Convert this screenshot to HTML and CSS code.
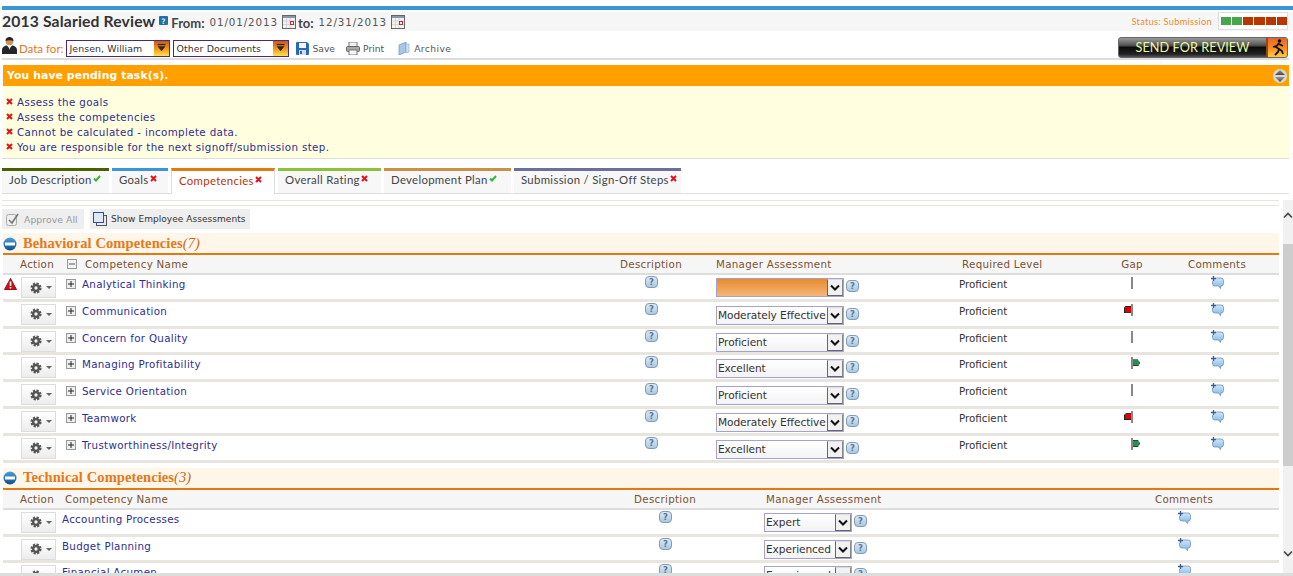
FILE: index.html
```html
<!DOCTYPE html>
<html lang="en">
<head>
<meta charset="utf-8">
<title>2013 Salaried Review</title>
<link rel="stylesheet" href="styles.css">
</head>
<body>
<svg class="defs" width="0" height="0" aria-hidden="true">
  <defs>
    <linearGradient id="gBlue" x1="0" y1="0" x2="0" y2="1"><stop offset="0" stop-color="#4aa0dc"/><stop offset="1" stop-color="#0d4f8e"/></linearGradient>
    <linearGradient id="gGrey" x1="0" y1="0" x2="0" y2="1"><stop offset="0" stop-color="#999"/><stop offset="1" stop-color="#444"/></linearGradient>
    <linearGradient id="gHelp" x1="0" y1="0" x2="0" y2="1"><stop offset="0" stop-color="#dfeaf4"/><stop offset="1" stop-color="#a9c6e0"/></linearGradient>
    <linearGradient id="gBub" x1="0" y1="0" x2="0" y2="1"><stop offset="0" stop-color="#cfe5f7"/><stop offset="1" stop-color="#7fb6e6"/></linearGradient>
    <symbol id="i-x" viewBox="0 0 7 7"><path d="M1 1l5 5M6 1L1 6" stroke="#e8101c" stroke-width="2" fill="none"/></symbol>
    <symbol id="i-check" viewBox="0 0 8 7"><path d="M1 3.500l2 2L7 1" stroke="#35b52e" stroke-width="2" fill="none"/></symbol>
    <symbol id="i-help" viewBox="0 0 13 12"><rect x=".5" y=".5" width="12" height="11" rx="3.500" fill="url(#gHelp)" stroke="#7f9db8"/><text x="6.500" y="9.200" font-family="DejaVu Sans" font-size="8.500" font-weight="bold" text-anchor="middle" fill="#55779a">?</text></symbol>
    <symbol id="i-comment" viewBox="0 0 13 13"><path d="M4.500 2h5.500a2.500 2.500 0 0 1 2.500 2.500v3a2.500 2.500 0 0 1-2.500 2.500l-.5 2.500-2-2.500H4a2.500 2.500 0 0 1-2.500-2.500V5" fill="url(#gBub)" stroke="#6e93b8" stroke-width=".8"/><path d="M2.500 0v5M0 2.500h5" stroke="#3e5c92" stroke-width="1.300"/></symbol>
    <symbol id="i-gear" viewBox="0 0 14 14"><circle cx="7" cy="7" r="5.200" fill="none" stroke="#555" stroke-width="2.600" stroke-dasharray="2.550 1.530"/><circle cx="7" cy="7" r="3.300" fill="none" stroke="#555" stroke-width="2.800"/></symbol>
    <symbol id="i-plus" viewBox="0 0 10 10"><rect x=".5" y=".5" width="9" height="9" fill="#eee" stroke="#999"/><path d="M2 5h6M5 2v6" stroke="#222"/></symbol>
    <symbol id="i-minus" viewBox="0 0 10 10"><rect x=".5" y=".5" width="9" height="9" fill="#f2f2f2" stroke="#999"/><path d="M2 5h6" stroke="#555"/></symbol>
    <symbol id="i-section" viewBox="0 0 14 14"><circle cx="7" cy="7" r="6.500" fill="url(#gBlue)"/><rect x="2" y="5.500" width="10" height="3" fill="#fff"/></symbol>
    <symbol id="i-chev" viewBox="0 0 10 7"><path d="M1 1.500l4 4 4-4" stroke="#111" stroke-width="2" fill="none"/></symbol>
    <symbol id="i-cal" viewBox="0 0 14 14"><rect x=".5" y=".5" width="13" height="13" fill="#f4f2ec" stroke="#666"/><rect x="1" y="1" width="12" height="2" fill="#8a97a8"/><path d="M1 6h12M1 9.500h12M4.500 3v10M8 3v10" stroke="#c9c9d6" stroke-width=".7"/><rect x="8.500" y="6.500" width="3" height="3" fill="none" stroke="#b3304a"/></symbol>
    <symbol id="i-combo" viewBox="0 0 16 16"><path d="M3 5.500h9L7.500 11z" fill="#3a2410"/><path d="M3 3.500h9" stroke="#3a2410" stroke-width="1.500"/></symbol>
  </defs>
</svg>
<div class="app">
  <div class="accent"></div>
  <header class="titlebar">
    <h1 class="title">2013 Salaried Review</h1>
    <svg class="title-help" width="9" height="9" viewBox="0 0 9 9"><rect width="9" height="9" rx="1" fill="#1f6fa8"/><text x="4.500" y="7.500" font-family="DejaVu Sans" font-size="7.500" font-weight="bold" text-anchor="middle" fill="#cfe6f5">?</text></svg>
    <span class="range-label">From:</span>
    <span class="date">01/01/2013</span>
    <svg class="cal" width="14" height="14"><use href="#i-cal"/></svg>
    <span class="range-label to">to:</span>
    <span class="date">12/31/2013</span>
    <svg class="cal" width="14" height="14"><use href="#i-cal"/></svg>
    <div class="status">
      <span class="status-text">Status: Submission</span>
      <div class="status-steps">
        <i class="step done"></i><i class="step done"></i><i class="step todo"></i><i class="step todo"></i><i class="step todo"></i><i class="step todo"></i>
      </div>
    </div>
  </header>
  <div class="toolbar">
    <svg class="person" width="15" height="17" viewBox="0 0 15 17"><circle cx="7.500" cy="4.500" r="3.800" fill="#c8935e"/><path d="M3.500 4C3.500 1 5.500 0 7.500 0s4 1 4 4C9 3 6 3 3.500 4z" fill="#2a2320"/><path d="M0 17v-4c0-3 3-4.500 5-4.500l2.500 3 2.500-3c2 0 5 1.500 5 4.500v4z" fill="#26262a"/><path d="M6.500 9h2l-1 4z" fill="#eee"/></svg>
    <span class="data-for">Data for:</span>
    <div class="combo combo-a"><span class="combo-val">Jensen, William</span><span class="combo-btn"><svg width="14" height="15"><use href="#i-combo"/></svg></span></div>
    <div class="combo combo-b"><span class="combo-val">Other Documents</span><span class="combo-btn"><svg width="14" height="15"><use href="#i-combo"/></svg></span></div>
    <a class="tool tool-save"><svg width="13" height="13" viewBox="0 0 13 13"><path d="M0 1a1 1 0 0 1 1-1h10l2 2v10a1 1 0 0 1-1 1H1a1 1 0 0 1-1-1z" fill="#2a68b0"/><rect x="3" y="1" width="7" height="5" fill="#f2f6fb"/><rect x="3" y="8" width="7" height="5" fill="#cfdcec"/><rect x="4" y="9" width="2" height="3" fill="#2a68b0"/></svg>Save</a>
    <a class="tool tool-print"><svg width="14" height="13" viewBox="0 0 14 13"><rect x="3" y="0" width="8" height="5" fill="#f2f2f2" stroke="#777"/><rect x=".5" y="4.500" width="13" height="5" rx="1" fill="#a8a8a8" stroke="#666"/><rect x="3" y="8" width="8" height="5" fill="#f8f8f8" stroke="#777"/></svg>Print</a>
    <a class="tool tool-archive"><svg width="12" height="13" viewBox="0 0 12 13"><path d="M1 3l7-3v10l-7 3z" fill="#a9c6e6" stroke="#6d93bc" stroke-width=".7"/><path d="M8 2h3v8l-3 1z" fill="#d2e2f2" stroke="#8fb0d0" stroke-width=".7"/></svg>Archive</a>
    <button class="send" type="button"><span class="send-label">SEND FOR REVIEW</span><span class="send-run"><svg width="14" height="17" viewBox="0 0 14 17"><circle cx="8.500" cy="2" r="1.800" fill="#111"/><path d="M8 4L5 8l3 2-1 3-3 3M8 5l4 2M5 7L2 8M8 10l3 2 1 3" stroke="#111" stroke-width="1.800" fill="none"/></svg></span></button>
  </div>
  <section class="alert">
    <div class="alert-head"><span>You have pending task(s).</span>
      <svg width="14" height="14" viewBox="0 0 14 14"><circle cx="7" cy="7" r="7" fill="#d8d8d8"/><path d="M7 1l5 5H2z" fill="url(#gGrey)"/><path d="M7 13L2 8h10z" fill="url(#gGrey)"/></svg>
    </div>
    <ul class="alert-list">
      <li><svg width="7" height="7"><use href="#i-x"/></svg>Assess the goals</li>
      <li><svg width="7" height="7"><use href="#i-x"/></svg>Assess the competencies</li>
      <li><svg width="7" height="7"><use href="#i-x"/></svg>Cannot be calculated - incomplete data.</li>
      <li><svg width="7" height="7"><use href="#i-x"/></svg>You are responsible for the next signoff/submission step.</li>
    </ul>
  </section>
  <nav class="tabs">
    <a class="tab t-job">Job Description<svg width="8" height="7"><use href="#i-check"/></svg></a>
    <a class="tab t-goals">Goals<svg width="7" height="7"><use href="#i-x"/></svg></a>
    <a class="tab t-comp active">Competencies<svg width="7" height="7"><use href="#i-x"/></svg></a>
    <a class="tab t-over">Overall Rating<svg width="7" height="7"><use href="#i-x"/></svg></a>
    <a class="tab t-dev">Development Plan<svg width="8" height="7"><use href="#i-check"/></svg></a>
    <a class="tab t-sub">Submission / Sign-Off Steps<svg width="7" height="7"><use href="#i-x"/></svg></a>
  </nav>
  <div class="pane">
    <main class="content">
      <div class="actions">
        <button class="act act-off" type="button"><svg width="15" height="15" viewBox="0 0 15 15"><rect x="1.500" y="2.500" width="10" height="11" rx="2" fill="#eee" stroke="#aaa"/><path d="M4 8l3 3 6-9" stroke="#777" stroke-width="1.600" fill="none"/></svg>Approve All</button>
        <button class="act act-show" type="button"><svg width="14" height="14" viewBox="0 0 14 14"><rect x="3.500" y="3.500" width="10" height="10" fill="#e6e6ee" stroke="#555"/><rect x=".5" y=".5" width="10" height="10" fill="#dfe9f6" stroke="#2c4f9a"/></svg>Show Employee Assessments</button>
      </div>

      <h2 class="section-head"><svg width="14" height="14"><use href="#i-section"/></svg><span>Behavioral Competencies<em>(7)</em></span></h2>
      <div class="grid-a colhead">
        <span></span><span class="c-action">Action</span><span class="c-tree"><svg width="10" height="10"><use href="#i-minus"/></svg></span><span class="a-name">Competency Name</span><span class="ctr">Description</span><span class="mgr-a">Manager Assessment</span><span class="req">Required Level</span><span class="ctr">Gap</span><span class="ctr">Comments</span>
      </div>

      <div class="grid-a row">
        <span class="warn"><svg width="13" height="12" viewBox="0 0 13 12"><path d="M6.500 .5L12.500 11.500H.5z" fill="#c8141c" stroke="#9a0f14" stroke-linejoin="round"/><rect x="5.700" y="3.500" width="1.600" height="4.500" fill="#fff"/><rect x="5.700" y="9" width="1.600" height="1.500" fill="#fff"/></svg></span>
        <button class="gear" type="button"><svg width="14" height="14"><use href="#i-gear"/></svg><i class="caret"></i></button>
        <span class="tree"><svg width="10" height="10"><use href="#i-plus"/></svg></span>
        <a class="name">Analytical Thinking</a>
        <span class="ico"><svg width="13" height="12"><use href="#i-help"/></svg></span>
        <span class="mgr-a cell-sel"><span class="sel sel-a sel-empty"><span class="sel-val"></span><span class="sel-btn"><svg width="10" height="7"><use href="#i-chev"/></svg></span></span><svg class="sel-help" width="13" height="12"><use href="#i-help"/></svg></span>
        <span class="level">Proficient</span>
        <span class="gap"><i class="pole"></i></span>
        <span class="ico"><svg width="13" height="13"><use href="#i-comment"/></svg></span>
      </div>
      <div class="grid-a row">
        <span></span>
        <button class="gear" type="button"><svg width="14" height="14"><use href="#i-gear"/></svg><i class="caret"></i></button>
        <span class="tree"><svg width="10" height="10"><use href="#i-plus"/></svg></span>
        <a class="name">Communication</a>
        <span class="ico"><svg width="13" height="12"><use href="#i-help"/></svg></span>
        <span class="mgr-a cell-sel"><span class="sel sel-a"><span class="sel-val">Moderately Effective</span><span class="sel-btn"><svg width="10" height="7"><use href="#i-chev"/></svg></span></span><svg class="sel-help" width="13" height="12"><use href="#i-help"/></svg></span>
        <span class="level">Proficient</span>
        <span class="gap"><i class="flag flag-low"></i><i class="pole"></i></span>
        <span class="ico"><svg width="13" height="13"><use href="#i-comment"/></svg></span>
      </div>
      <div class="grid-a row">
        <span></span>
        <button class="gear" type="button"><svg width="14" height="14"><use href="#i-gear"/></svg><i class="caret"></i></button>
        <span class="tree"><svg width="10" height="10"><use href="#i-plus"/></svg></span>
        <a class="name">Concern for Quality</a>
        <span class="ico"><svg width="13" height="12"><use href="#i-help"/></svg></span>
        <span class="mgr-a cell-sel"><span class="sel sel-a"><span class="sel-val">Proficient</span><span class="sel-btn"><svg width="10" height="7"><use href="#i-chev"/></svg></span></span><svg class="sel-help" width="13" height="12"><use href="#i-help"/></svg></span>
        <span class="level">Proficient</span>
        <span class="gap"><i class="pole"></i></span>
        <span class="ico"><svg width="13" height="13"><use href="#i-comment"/></svg></span>
      </div>
      <div class="grid-a row">
        <span></span>
        <button class="gear" type="button"><svg width="14" height="14"><use href="#i-gear"/></svg><i class="caret"></i></button>
        <span class="tree"><svg width="10" height="10"><use href="#i-plus"/></svg></span>
        <a class="name">Managing Profitability</a>
        <span class="ico"><svg width="13" height="12"><use href="#i-help"/></svg></span>
        <span class="mgr-a cell-sel"><span class="sel sel-a"><span class="sel-val">Excellent</span><span class="sel-btn"><svg width="10" height="7"><use href="#i-chev"/></svg></span></span><svg class="sel-help" width="13" height="12"><use href="#i-help"/></svg></span>
        <span class="level">Proficient</span>
        <span class="gap"><i class="pole"></i><i class="flag flag-high"></i></span>
        <span class="ico"><svg width="13" height="13"><use href="#i-comment"/></svg></span>
      </div>
      <div class="grid-a row">
        <span></span>
        <button class="gear" type="button"><svg width="14" height="14"><use href="#i-gear"/></svg><i class="caret"></i></button>
        <span class="tree"><svg width="10" height="10"><use href="#i-plus"/></svg></span>
        <a class="name">Service Orientation</a>
        <span class="ico"><svg width="13" height="12"><use href="#i-help"/></svg></span>
        <span class="mgr-a cell-sel"><span class="sel sel-a"><span class="sel-val">Proficient</span><span class="sel-btn"><svg width="10" height="7"><use href="#i-chev"/></svg></span></span><svg class="sel-help" width="13" height="12"><use href="#i-help"/></svg></span>
        <span class="level">Proficient</span>
        <span class="gap"><i class="pole"></i></span>
        <span class="ico"><svg width="13" height="13"><use href="#i-comment"/></svg></span>
      </div>
      <div class="grid-a row">
        <span></span>
        <button class="gear" type="button"><svg width="14" height="14"><use href="#i-gear"/></svg><i class="caret"></i></button>
        <span class="tree"><svg width="10" height="10"><use href="#i-plus"/></svg></span>
        <a class="name">Teamwork</a>
        <span class="ico"><svg width="13" height="12"><use href="#i-help"/></svg></span>
        <span class="mgr-a cell-sel"><span class="sel sel-a"><span class="sel-val">Moderately Effective</span><span class="sel-btn"><svg width="10" height="7"><use href="#i-chev"/></svg></span></span><svg class="sel-help" width="13" height="12"><use href="#i-help"/></svg></span>
        <span class="level">Proficient</span>
        <span class="gap"><i class="flag flag-low"></i><i class="pole"></i></span>
        <span class="ico"><svg width="13" height="13"><use href="#i-comment"/></svg></span>
      </div>
      <div class="grid-a row">
        <span></span>
        <button class="gear" type="button"><svg width="14" height="14"><use href="#i-gear"/></svg><i class="caret"></i></button>
        <span class="tree"><svg width="10" height="10"><use href="#i-plus"/></svg></span>
        <a class="name">Trustworthiness/Integrity</a>
        <span class="ico"><svg width="13" height="12"><use href="#i-help"/></svg></span>
        <span class="mgr-a cell-sel"><span class="sel sel-a"><span class="sel-val">Excellent</span><span class="sel-btn"><svg width="10" height="7"><use href="#i-chev"/></svg></span></span><svg class="sel-help" width="13" height="12"><use href="#i-help"/></svg></span>
        <span class="level">Proficient</span>
        <span class="gap"><i class="pole"></i><i class="flag flag-high"></i></span>
        <span class="ico"><svg width="13" height="13"><use href="#i-comment"/></svg></span>
      </div>

      <h2 class="section-head second"><svg width="14" height="14"><use href="#i-section"/></svg><span>Technical Competencies<em>(3)</em></span></h2>
      <div class="grid-b colhead">
        <span></span><span class="c-action">Action</span><span class="b-name">Competency Name</span><span class="ctr">Description</span><span class="mgr-b">Manager Assessment</span><span class="ctr">Comments</span>
      </div>
      <div class="grid-b row">
        <span></span>
        <button class="gear" type="button"><svg width="14" height="14"><use href="#i-gear"/></svg><i class="caret"></i></button>
        <a class="name">Accounting Processes</a>
        <span class="ico"><svg width="13" height="12"><use href="#i-help"/></svg></span>
        <span class="mgr-b cell-sel"><span class="sel sel-b"><span class="sel-val">Expert</span><span class="sel-btn"><svg width="10" height="7"><use href="#i-chev"/></svg></span></span><svg class="sel-help" width="13" height="12"><use href="#i-help"/></svg></span>
        <span class="ico"><svg width="13" height="13"><use href="#i-comment"/></svg></span>
      </div>
      <div class="grid-b row">
        <span></span>
        <button class="gear" type="button"><svg width="14" height="14"><use href="#i-gear"/></svg><i class="caret"></i></button>
        <a class="name">Budget Planning</a>
        <span class="ico"><svg width="13" height="12"><use href="#i-help"/></svg></span>
        <span class="mgr-b cell-sel"><span class="sel sel-b"><span class="sel-val">Experienced</span><span class="sel-btn"><svg width="10" height="7"><use href="#i-chev"/></svg></span></span><svg class="sel-help" width="13" height="12"><use href="#i-help"/></svg></span>
        <span class="ico"><svg width="13" height="13"><use href="#i-comment"/></svg></span>
      </div>
      <div class="grid-b row">
        <span></span>
        <button class="gear" type="button"><svg width="14" height="14"><use href="#i-gear"/></svg><i class="caret"></i></button>
        <a class="name">Financial Acumen</a>
        <span class="ico"><svg width="13" height="12"><use href="#i-help"/></svg></span>
        <span class="mgr-b cell-sel"><span class="sel sel-b"><span class="sel-val">Experienced</span><span class="sel-btn"><svg width="10" height="7"><use href="#i-chev"/></svg></span></span><svg class="sel-help" width="13" height="12"><use href="#i-help"/></svg></span>
        <span class="ico"><svg width="13" height="13"><use href="#i-comment"/></svg></span>
      </div>
    </main>
    <div class="scrollbar">
      <svg width="10" height="7" viewBox="0 0 10 7"><path d="M1 5.500l4-4 4 4" stroke="#444" stroke-width="1.600" fill="none"/></svg>
      <div class="thumb"></div>
      <svg class="down" width="10" height="7" viewBox="0 0 10 7"><path d="M1 1.500l4 4 4-4" stroke="#444" stroke-width="1.600" fill="none"/></svg>
    </div>
  </div>
  <div class="foot"></div>
</div>
</body>
</html>
```
FILE: styles.css
```css
* { box-sizing: border-box; }
html, body { margin: 0; height: 576px; overflow: hidden; background: #fff; }
body { font-family: "DejaVu Sans", sans-serif; font-size: 10.3px; color: #2e2e8e; }
svg { display: block; flex: none; }
.defs { position: absolute; }
.app { display: flex; flex-direction: column; height: 576px; }

.accent { height: 4px; margin: 6px 0 2px 2px; background: #3a96d6; flex: none; }

.titlebar { flex: none; height: 19px; display: flex; align-items: center; margin-left: 2px; padding-right: 5px; background: #f6f6f6; }
.title { margin: 0; font: bold 15.700px/19px "Lato", sans-serif; color: #333; letter-spacing: .15px; white-space: nowrap; }
.title-help { margin: -3px 0 0 4px; }
.range-label { margin: 2px 0 0 3px; font: bold 13px "Lato", sans-serif; color: #444; }
.range-label.to { margin-left: 2px; }
.date { margin: 0 4px 0 5px; color: #555; letter-spacing: .9px; white-space: nowrap; }
.cal { margin: 0; }
.status { margin-left: auto; display: flex; align-items: center; }
.status-text { font: 9.200px "Lato", sans-serif; letter-spacing: .3px; color: #ec8a2b; }
.status-steps { margin-left: 6px; display: flex; gap: 1px; align-items: center; width: 70px; height: 18px; margin-top: -1px; padding-left: 1.500px; border: 1px solid #ddd; background: #fff; }
.step { width: 10.800px; height: 8px; }
.step.done { background: #47a64a; }
.step.todo { background: #b93600; }

.toolbar { flex: none; height: 29px; margin: 0 4px 0 2px; display: flex; align-items: center; border-bottom: 2px solid #ddd; padding-top: 8px; color: #555; }
.person { margin-top: -6px; }
.data-for { margin-left: 2px; font: 11.500px "Lato", sans-serif; color: #e4771b; }
.combo { display: flex; height: 17px; border: 1px solid #4a2a78; background: #fff; color: #333; }
.combo-a { width: 104px; margin-left: 3px; }
.combo-b { width: 116px; margin-left: 3px; }
.combo-val { flex: 1; padding-left: 2px; line-height: 15px; font-size: 9.400px; letter-spacing: .1px; white-space: nowrap; }
.combo-btn { width: 15px; display: flex; justify-content: center; background: linear-gradient(#c9591c, #f29b1f 55%, #ffe34a); }
.tool { display: flex; align-items: center; gap: 3px; white-space: nowrap; font-size: 9.200px; color: #555; }
.tool-save { margin-left: 7px; }
.tool-print { margin-left: 11px; }
.tool-archive { margin-left: 14px; gap: 4px; letter-spacing: .4px; }
.send { margin-left: auto; margin-right: 1px; margin-top: -3px; width: 170px; height: 21px; padding: 0; display: flex; border: 1px solid #666; border-radius: 3px; overflow: hidden; background: linear-gradient(#9a9a9a, #555 38%, #0c0c0c 50%, #222 85%, #555); cursor: pointer; }
.send-label { flex: 1; font: 12.700px/19px "Lato", sans-serif; letter-spacing: .05px; color: #e9f9a0; }
.send-run { width: 21px; display: flex; justify-content: center; align-items: center; background: linear-gradient(#e8632a, #f58a22 50%, #ffcc33); border-left: 2px solid #8a4a1c; }

.alert { flex: none; margin: 5px 4px 0 3px; background: #ffffe0; height: 93px; }
.alert-head { height: 21px; display: flex; align-items: center; justify-content: space-between; padding: 0 2px 0 4px; background: #ffa000; color: #fff; font-weight: bold; font-size: 10.800px; letter-spacing: .12px; }
.alert-list { margin: 9px 0 0; padding: 0 0 0 3px; list-style: none; }
.alert-list li { height: 15px; line-height: 15px; display: flex; align-items: center; white-space: nowrap; letter-spacing: .36px; }
.alert-list li svg { margin: -3px 4px 0 0; }

.tabs { flex: none; height: 36px; margin: 0 4px 0 2px; padding-top: 9px; display: flex; border-top: 1px solid #ddd; border-bottom: 1px solid #ddd; }
.tab { height: 25px; padding: 2px 0 0 7px; display: flex; gap: 1px; align-items: flex-start; background: #f7f7f7; border-top: 3px solid; font: 11.400px/13px "Lato", sans-serif; letter-spacing: .3px; color: #444; white-space: nowrap; }
.tab svg { margin-top: 2px; }
.t-job { width: 107px; border-color: #4a6000; }
.t-goals { width: 56px; margin-left: 3px; border-color: #3a96d6; }
.t-comp { width: 104px; margin-left: 3px; border-color: #e47911; }
.t-over { width: 103px; margin-left: 3px; border-color: #8fc03a; }
.t-dev { width: 127px; margin-left: 3px; border-color: #cc8f4b; }
.t-sub { width: 167px; margin-left: 3px; border-color: #6d6d9e; }
.tab.active { height: 26px; background: #fff; color: #b8360a; padding-top: 3px; border-left: 1px solid #ddd; border-right: 1px solid #ddd; }

.pane { flex: 1; min-height: 0; display: flex; overflow: hidden; margin-top: 6px; }
.content { width: 1279px; flex: none; overflow: hidden; padding-left: 2px; height: 373px; }
.content::before { content: ""; display: block; height: 4px; border-top: 1px solid #e8e5e0; border-bottom: 1px solid #e8e5e0; }
.actions { display: flex; gap: 6px; margin: 3px 0 4px; height: 20px; }
.act { height: 20px; padding: 0 0 0 3px; display: flex; align-items: center; gap: 4px; border: 0; background: #eee; font: 9px "DejaVu Sans", sans-serif; color: #333; letter-spacing: .05px; }
.act-off { width: 82px; color: #999; font-size: 9.300px; }
.act-show { width: 160px; }

.section-head { margin: 0 0 0 1px; height: 22px; display: flex; align-items: center; gap: 6px; background: #fff6ea; border-bottom: 2px solid #e47911; font: bold 14.500px "Liberation Serif", serif; letter-spacing: .1px; color: #e67817; white-space: nowrap; }
.section-head svg { margin-top: 1px; }
.section-head em { font-weight: normal; color: #c9651a; }
.section-head.second { margin-top: 5px; }

.grid-a, .grid-b { display: grid; margin-left: 1px; align-items: start; }
.grid-a { grid-template-columns: 17px 42px 20px 529px 80px 264px 152px 50px 120px; }
.grid-b { grid-template-columns: 17px 42px 543px 120px 366px 186px; }
.colhead { height: 20px; padding-top: 3px; background: #f6f6f6; border-bottom: 2px solid #ddd; color: #7a5230; line-height: 13px; letter-spacing: .3px; white-space: nowrap; }
.c-tree { padding: 0 0 0 5px; }
.c-tree svg { margin-top: 1px; }
.a-name { padding-left: 3px; }
.colhead .ctr { text-align: center; }
.req { padding-left: 7px; }
.mgr-a { padding-left: 25px; }
.mgr-b { padding-left: 41px; }
.cell-sel.mgr-b { padding-left: 39px; }
.b-name { padding-left: 3px; }

.row { height: 26.830px; border-bottom: 3px solid #e8e5e0; white-space: nowrap; }
.warn { padding: 3px 0 0 1px; }
.gear { width: 35px; height: 21px; margin: 2px 0 0 1px; padding: 0 0 0 8px; display: flex; align-items: center; gap: 4px; border: 1px solid #ddd; background: linear-gradient(#fff, #ececec); }
.gear svg { width: 12px; height: 12px; }
.caret { width: 0; height: 0; border: 3px solid transparent; border-top: 3px solid #666; border-bottom: 0; }
.tree { padding: 4px 0 0 4px; }
.name { padding-top: 3px; line-height: 13px; color: #2e2e8e; letter-spacing: .3px; }
.ico { display: flex; justify-content: center; padding-top: 1px; }
.cell-sel { display: flex; align-items: flex-start; gap: 2px; padding-top: 3px; }
.grid-a .cell-sel { padding-top: 4px; }
.grid-a.colhead + .row .cell-sel { padding-top: 3px; }
.sel { height: 19px; display: flex; border: 1px solid #a5a3cc; background: linear-gradient(#fff, #f3f3f3); color: #333; }
.sel-a { width: 128px; }
.sel-b { width: 88px; }
.sel-empty { background: linear-gradient(#e98a2c, #f5b67a); }
.sel-val { flex: 1; overflow: hidden; padding-left: 1px; line-height: 17px; font-size: 10.600px; letter-spacing: -.08px; }
.sel-btn { width: 16px; display: flex; align-items: center; justify-content: center; background: #f1f1f1; border-left: 1px solid #666; border-top: 1px solid #ddd; border-right: 1px solid #888; border-bottom: 1px solid #666; }
.sel-help { margin-top: 2px; }
.level { padding: 3px 0 0 4px; line-height: 13px; color: #333; }
.gap { display: flex; justify-content: center; padding-top: 2px; height: 14px; }
.pole { width: 2px; height: 12px; background: #888; flex: none; }
.flag { flex: none; width: 7px; height: 7px; margin-top: 2px; }
.flag-low { background: #d00; border: 1px solid #222; border-right: 0; clip-path: polygon(30% 0, 100% 0, 100% 100%, 0 100%, 0 30%); margin-left: -7px; }
.flag-high { background: #2e8b57; border: 1px solid #14532d; border-left: 0; clip-path: polygon(0 0, 70% 0, 100% 50%, 70% 100%, 0 100%); margin-right: -7px; }

.scrollbar { width: 10px; margin-left: 4px; height: 373px; background: #f1f1f1; display: flex; flex-direction: column; }
.scrollbar svg:first-child { margin: 12px 0 0; }
.thumb { height: 222px; margin-top: 25px; background: #cdcdcd; flex: none; }
.down { margin-top: 84px; }
.foot { flex: none; height: 3px; background: #ddd; }
```
